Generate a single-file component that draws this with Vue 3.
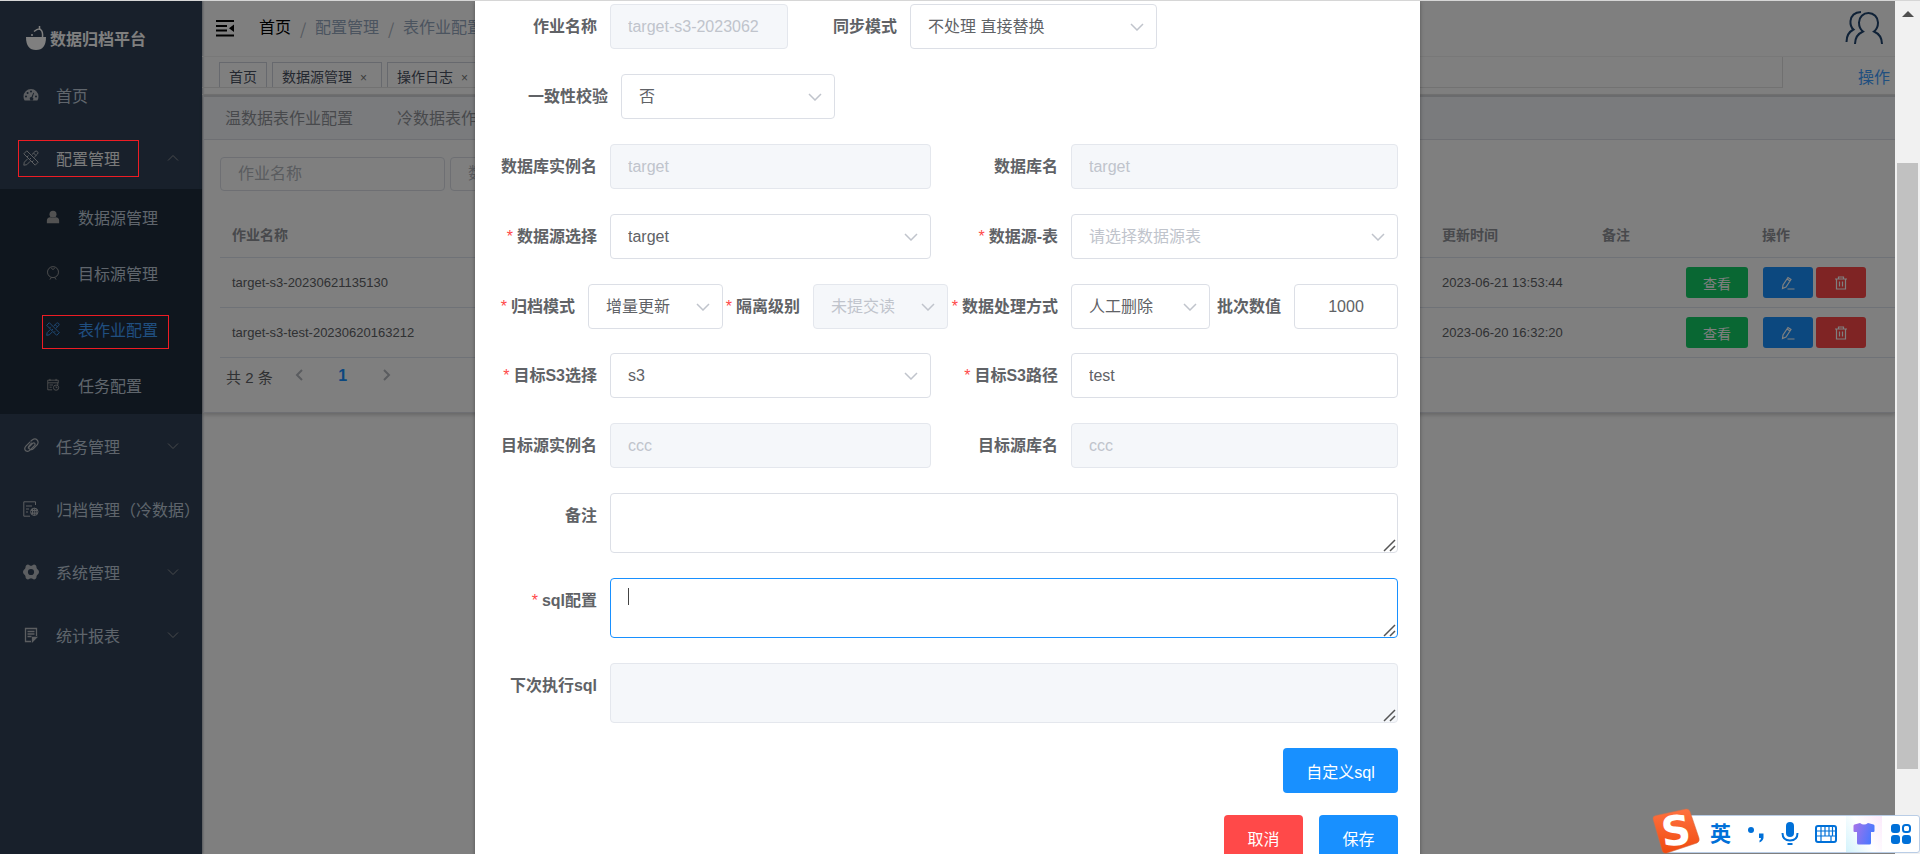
<script setup>
import { ref } from 'vue'

const menu = [
  { label: '首页', icon: 'dash' },
  {
    label: '配置管理', icon: 'tools', arrow: 'fold', open: true, marked: true,
    children: [
      { label: '数据源管理', icon: 'person' },
      { label: '目标源管理', icon: 'medal' },
      { label: '表作业配置', icon: 'tools', active: true },
      { label: '任务配置', icon: 'schedule' }
    ]
  },
  { label: '任务管理', icon: 'link', arrow: 'unfold' },
  { label: '归档管理（冷数据）', icon: 'archive' },
  { label: '系统管理', icon: 'gear', arrow: 'unfold' },
  { label: '统计报表', icon: 'note', arrow: 'unfold' }
]

const icons = {
  dash: '<path fill="currentColor" fill-rule="evenodd" d="M8 2a7.5 7.5 0 0 0-7.5 7.5c0 1.6.4 2.9 1.1 4h12.8c.7-1.1 1.1-2.400 1.100-4A7.500 7.500 0 0 0 8 2ZM3 8.600a1 1 0 1 1 0 2 1 1 0 0 1 0-2Zm1.600-3.600a1 1 0 1 1 0 2 1 1 0 0 1 0-2ZM8 3.400a1 1 0 1 1 0 2 1 1 0 0 1 0-2Zm2.300 2.400.8.300-1.600 4.300a1.700 1.700 0 1 1-1-.3Zm2.700 2.800a1 1 0 1 1 0 2 1 1 0 0 1 0-2Z"/>',
  tools: '<g fill="none" stroke="currentColor"><path d="M.8 3.800 3.800.8 15.200 12.200 12.200 15.200ZM4 7l1.500-1.500M6.500 9.500 8 8M9 12l1.500-1.500"/><path d="M8.800 4.700 12 1.500q1.200-1 2.400.1t.1 2.400L11.300 7.200M4.700 8.800 1.300 12.200.8 15.200l3-.5 3.400-3.400M10.500 3l2.500 2.500"/></g>',
  person: '<g fill="currentColor"><circle cx="8" cy="4.800" r="4"/><path d="M1 15v-3Q1 8.800 5 8.300q3 1.600 6 0 4 .5 4 3.700v3Z"/></g>',
  medal: '<g fill="none" stroke="currentColor"><circle cx="8" cy="7" r="6.300"/><path d="M6 2.500q2 3 4 0M6 13.300l-1.500 2.200M10 13.300l1.500 2.200"/></g>',
  schedule: '<g fill="none" stroke="currentColor"><path d="M2 2.500h12v3H2ZM4.500 1v2.500M11.500 1v2.500M2 5.500v8h5M13.500 5.500V8M4 8h4M4 10.500h2.500"/><circle cx="11.500" cy="11" r="3"/><path d="M11.500 9.500V11H13"/></g>',
  link: '<g fill="none" stroke="currentColor" stroke-width="1.200" stroke-linecap="round"><path d="M5.200 9.800 9.700 5.300q1.200-1 2 0t0 2L7 12.200q-2 2-4.300.6-2-2 .2-4.600l4-4"/><path d="M8 3l1.500-1.300q2.700-1.700 4.600.3t.2 4.700L10.500 10.500q-2 2-4 .5t0-3.700L8.500 5.200"/></g>',
  archive: '<g fill="none" stroke="currentColor"><path d="M12.500 4V.8H.8v14.400H7M3 5h6M3 8h3M3 11h2"/><circle cx="11.300" cy="10.800" r="3.700"/><path d="M7.800 9.500h7M7.800 12.200h7M11.300 7v7.500M9.500 8v5.500M13.200 8v5.500"/></g>',
  gear: '<path fill="currentColor" fill-rule="evenodd" d="M3.300 1.200Q5 0 6.500 1.300q1.500 1 3 0Q11 0 12.700 1.200q.9.8.8 2.300.2 1.500 1.500 2.300Q16 6.500 16 8t-1 2.200q-1.300.8-1.500 2.300.1 1.500-.8 2.300Q11 16 9.500 14.700q-1.500-1-3 0Q5 16 3.300 14.800q-.9-.8-.8-2.300-.2-1.500-1.500-2.300Q0 9.500 0 8t1-2.200q1.300-.8 1.500-2.300-.1-1.500.8-2.300ZM8 4.900a3.100 3.100 0 1 0 0 6.200 3.100 3.100 0 0 0 0-6.200Z"/>',
  note: '<g fill="none" stroke="currentColor" stroke-width="1.300"><path d="M13.500 9V1.500h-11v13H8M4.500 4.500h7M4.500 7h7M4.500 9.500h4"/><path fill="currentColor" d="M9.500 14.500v-4h4Z"/></g>'
}

const tags = [
  { label: '首页' },
  { label: '数据源管理', closable: true },
  { label: '操作日志', closable: true }
]

const jobs = [
  { name: 'target-s3-20230621135130', time: '2023-06-21 13:53:44' },
  { name: 'target-s3-test-20230620163212', time: '2023-06-20 16:32:20' }
]

const rows = [
  {
    layout: 'row-name',
    fields: [
      { id: 'job', label: '作业名称', kind: 'input', value: 'target-s3-20230621135130', disabled: true },
      { id: 'sync', label: '同步模式', kind: 'select', value: '不处理 直接替换' }
    ]
  },
  { layout: 'row-check', fields: [{ id: 'check', label: '一致性校验', kind: 'select', value: '否' }] },
  {
    layout: 'row-pair',
    fields: [
      { id: 'inst', label: '数据库实例名', kind: 'input', value: 'target', disabled: true },
      { id: 'db', label: '数据库名', kind: 'input', value: 'target', disabled: true }
    ]
  },
  {
    layout: 'row-pair',
    fields: [
      { id: 'src', label: '数据源选择', kind: 'select', value: 'target', required: true },
      { id: 'srctable', label: '数据源-表', kind: 'select', value: '请选择数据源表', required: true, empty: true }
    ]
  },
  {
    layout: 'row-modes',
    fields: [
      { id: 'mode', label: '归档模式', kind: 'select', value: '增量更新', required: true },
      { id: 'iso', label: '隔离级别', kind: 'select', value: '未提交读', required: true, disabled: true },
      { id: 'handle', label: '数据处理方式', kind: 'select', value: '人工删除', required: true },
      { id: 'batch', label: '批次数值', kind: 'input', value: '1000', center: true }
    ]
  },
  {
    layout: 'row-pair',
    fields: [
      { id: 's3', label: '目标S3选择', kind: 'select', value: 's3', required: true },
      { id: 's3path', label: '目标S3路径', kind: 'input', value: 'test', required: true }
    ]
  },
  {
    layout: 'row-pair',
    fields: [
      { id: 'tinst', label: '目标源实例名', kind: 'input', value: 'ccc', disabled: true },
      { id: 'tdb', label: '目标源库名', kind: 'input', value: 'ccc', disabled: true }
    ]
  },
  { layout: 'row-area', fields: [{ id: 'remark', label: '备注', kind: 'area' }] },
  { layout: 'row-area', fields: [{ id: 'sql', label: 'sql配置', kind: 'area', required: true, focused: true }] },
  { layout: 'row-area', fields: [{ id: 'nextsql', label: '下次执行sql', kind: 'area', disabled: true }] }
]

const form = ref({ remark: '', sql: '', nextsql: '' })
</script>

<template>
  <div class="app">
    <nav class="sidebar">
      <div class="logo">
        <svg width="22" height="26" viewBox="0 0 22 26" aria-hidden="true">
          <path fill="#fff" d="M1 12h20q0 13-10 13T1 12Z" />
          <path fill="none" stroke="#fff" stroke-width="1.500" d="M9 6.500q5-4 7-1.500 2 2 1.500 7M14.500 5V1" />
          <circle cx="7" cy="10" r="1" fill="#fff" />
        </svg>
        <strong>数据归档平台</strong>
      </div>
      <ul class="menu">
        <li v-for="m in menu" :key="m.label">
          <a href="#" class="item" :class="{ open: m.open, marked: m.marked }">
            <svg width="16" height="16" viewBox="0 0 16 16" aria-hidden="true" v-html="icons[m.icon]"></svg>
            <span>{{ m.label }}</span>
            <svg v-if="m.arrow" class="arrow" :class="m.arrow" width="12" height="8" viewBox="0 0 12 8" aria-hidden="true">
              <path d="M1 1.500 6 6.500 11 1.500" />
            </svg>
          </a>
          <ul v-if="m.children" class="submenu">
            <li v-for="c in m.children" :key="c.label">
              <a href="#" class="item sub" :class="{ active: c.active }">
                <svg width="14" height="14" viewBox="0 0 16 16" aria-hidden="true" v-html="icons[c.icon]"></svg>
                <span>{{ c.label }}</span>
              </a>
            </li>
          </ul>
        </li>
      </ul>
    </nav>

    <main class="main">
      <header class="topbar">
        <svg width="18" height="18" viewBox="0 0 18 18" aria-hidden="true">
          <path fill="none" stroke="#000" stroke-width="2" d="M0 2h18M0 7h11M0 11.500h11M0 16.500h18" />
          <path d="M18 5.500v7.500l-5-3.700Z" />
        </svg>
        <div class="crumbs">
          <a href="#" class="home">首页</a><i>/</i><span>配置管理</span><i>/</i><span>表作业配置</span>
        </div>
        <svg class="users" width="38" height="34" viewBox="0 0 38 34" aria-hidden="true">
          <path d="M10 33q0-9 8-12.500-4-3-4-9a9.500 9.500 0 0 1 19 0q0 6-4 9 8 3.500 8 12.500" />
          <path d="M1.500 31q0-9 7-12.500-3.500-3-3-8.500Q6.500 1.500 16 1" />
        </svg>
      </header>
      <div class="tagbar">
        <div class="tags">
          <span v-for="t in tags" :key="t.label" class="tag">{{ t.label }}<b v-if="t.closable">×</b></span>
        </div>
        <a href="#">操作</a>
      </div>
      <section class="card">
        <div class="tabs"><span>温数据表作业配置</span><span>冷数据表作业配置</span></div>
        <div class="filters">
          <input type="text" placeholder="作业名称" aria-label="作业名称" />
          <input type="text" placeholder="数据源" aria-label="数据源" />
        </div>
        <table>
          <colgroup><col /><col class="c-time" /><col class="c-remark" /><col class="c-ops" /></colgroup>
          <thead>
            <tr><th>作业名称</th><th>更新时间</th><th>备注</th><th class="center">操作</th></tr>
          </thead>
          <tbody>
            <tr v-for="j in jobs" :key="j.name">
              <td>{{ j.name }}</td>
              <td>{{ j.time }}</td>
              <td></td>
              <td>
                <div class="ops">
                  <button type="button" class="view">查看</button>
                  <button type="button" class="edit" aria-label="编辑">
                    <svg width="14" height="14" viewBox="0 0 14 14" aria-hidden="true">
                      <path d="M1.500 12.500 2 9 7 1.500l3 2L5 11ZM6 3l3 2M6.500 13H13.500" />
                    </svg>
                  </button>
                  <button type="button" class="del" aria-label="删除">
                    <svg width="14" height="14" viewBox="0 0 14 14" aria-hidden="true">
                      <path d="M1 3h12M4.500 3V1h5v2M2.500 3v10h9V3M5.500 5.500v5M8.500 5.500v5" />
                    </svg>
                  </button>
                </div>
              </td>
            </tr>
          </tbody>
        </table>
        <div class="pager">
          <span>共 2 条</span>
          <button type="button" aria-label="上一页"><svg width="8" height="12" viewBox="0 0 8 12"><path d="M7 1 2 6l5 5" /></svg></button>
          <button type="button" class="current">1</button>
          <button type="button" aria-label="下一页"><svg width="8" height="12" viewBox="0 0 8 12"><path d="M1 1l5 5-5 5" /></svg></button>
        </div>
      </section>
    </main>

    <div class="overlay">
      <form class="dialog" role="dialog" aria-label="表作业配置" @submit.prevent>
        <div v-for="(r, i) in rows" :key="i" class="row" :class="r.layout">
          <template v-for="f in r.fields" :key="f.id">
            <label :for="f.id"><em v-if="f.required">*</em>{{ f.label }}</label>
            <div class="control">
              <input v-if="f.kind === 'input'" :id="f.id" type="text" :value="f.value" :disabled="f.disabled" :class="{ centered: f.center }" />
              <template v-else-if="f.kind === 'select'">
                <select :id="f.id" :disabled="f.disabled" :class="{ empty: f.empty }"><option>{{ f.value }}</option></select>
                <svg class="caret" width="14" height="8" viewBox="0 0 14 8" aria-hidden="true"><path d="M1 1l6 6 6-6" /></svg>
              </template>
              <template v-else>
                <textarea :id="f.id" v-model="form[f.id]" :disabled="f.disabled" :class="{ focused: f.focused }"></textarea>
                <span v-if="f.focused" class="cursor"></span>
                <svg class="grip" width="13" height="13" viewBox="0 0 13 13" aria-hidden="true"><path d="M1 12 12 1M7 12l5-5" /></svg>
              </template>
            </div>
          </template>
        </div>
        <div class="actions"><button type="button" class="primary wide">自定义sql</button></div>
        <div class="actions footer">
          <button type="button" class="danger">取消</button>
          <button type="submit" class="primary">保存</button>
        </div>
      </form>
    </div>

    <div class="scrollbar" aria-hidden="true"><span class="up"></span><span class="thumb"></span></div>

    <div class="ime">
      <svg class="sogou" width="50" height="46" viewBox="0 0 50 46" aria-hidden="true">
        <defs>
          <linearGradient id="og" x1="0" y1="0" x2="0" y2="1"><stop offset="0" stop-color="#ff7240" /><stop offset="1" stop-color="#f04a10" /></linearGradient>
        </defs>
        <path fill="url(#og)" stroke="#c9714f" stroke-width=".5" d="M4 7.500 34 1q3-.6 4 2.500l9 26.500q1 3.500-2 5L15 45q-4 1-5-3L1 11q-.5-3 3-3.500Z" />
        <text x="24" y="37" text-anchor="middle" transform="rotate(-6 24 23)">S</text>
      </svg>
      <span class="lang">英</span>
      <svg width="18" height="18" viewBox="0 0 18 18" fill="#0070d8" aria-hidden="true"><circle cx="4" cy="5" r="3" /><path d="M12 8.500h4.500v4q0 3-4 5v-2q1.500-1 1.500-2.500h-2Z" /></svg>
      <svg width="18" height="24" viewBox="0 0 18 24" aria-hidden="true"><rect x="5" y="0" width="8" height="15" rx="4" fill="#0070d8" /><path fill="none" stroke="#0070d8" stroke-width="2" d="M1.500 11q0 7.500 7.500 7.500t7.500-7.500M6.500 22h5" /></svg>
      <svg width="22" height="18" viewBox="0 0 22 18" aria-hidden="true"><rect x="1" y="1" width="20" height="16" rx="2" fill="none" stroke="#0070d8" stroke-width="2" /><path fill="none" stroke="#0070d8" stroke-width="1.200" d="M2 6h18M2 11h18M6 2v14M10 2v9M14 2v9M17.500 2v9M16 11v5" /></svg>
      <span class="skin">
        <svg width="22" height="22" viewBox="0 0 22 22" aria-hidden="true">
          <defs><linearGradient id="sg" x1="0" y1="0" x2="1" y2="0.300"><stop offset="0" stop-color="#a873e8" /><stop offset="1" stop-color="#4a78ff" /></linearGradient></defs>
          <path fill="url(#sg)" d="M7 0q4 3 8 0l5.500 1.500q1 .3 1 1.500v5q0 1-1 1H18v11q0 1.500-1.500 1.500h-11Q4 21.500 4 20V9H1.500q-1 0-1-1V3q0-1.200 1-1.500Z" />
        </svg>
      </span>
      <svg width="20" height="20" viewBox="0 0 20 20" aria-hidden="true"><g fill="#0070d8"><rect width="9" height="9" rx="3" /><rect y="11" width="9" height="9" rx="3" /><rect x="11" y="11" width="9" height="9" rx="3" /></g><rect x="12" y="1" width="7" height="7" rx="2.500" fill="none" stroke="#0070d8" stroke-width="2" /></svg>
    </div>
  </div>
</template>

<style>
body { margin: 0; overflow: hidden; }
</style>

<style scoped>
.app {
  position: relative;
  display: flex;
  box-sizing: border-box;
  height: 100vh;
  padding-right: 25px;
  border-top: 1px solid #d6d6d6;
  overflow: hidden;
  background: #fff;
  font-family: "Liberation Sans", "Noto Sans CJK SC", sans-serif;
  font-size: 16px;
  color: #606266;
}
* { box-sizing: border-box; }
ul { margin: 0; padding: 0; list-style: none; }
a { color: inherit; text-decoration: none; }
button, input, select, textarea { font: inherit; }

/* sidebar */
.sidebar { flex: none; width: 202px; background: #304156; box-shadow: 1px 0 2px rgba(0, 21, 41, .35); }
.logo { display: flex; align-items: center; gap: 3px; height: 62px; padding: 11px 0 0 25px; color: #fff; white-space: nowrap; }
.item { position: relative; display: flex; align-items: center; height: 63px; padding-left: 23px; color: #bfcbd9; white-space: nowrap; }
.item > svg:first-child { flex: none; margin-right: 17px; color: #b8bcc2; }
.item.open { color: #f4f4f5; }
.arrow { position: absolute; right: 23px; fill: none; stroke: #909399; }
.arrow.fold { transform: rotate(180deg); }
.submenu { padding-bottom: 1px; background: #1f2d3d; }
.item.sub { height: 56px; padding-left: 46px; }
.item.sub > svg:first-child { margin-right: 18px; color: #a5a5a5; }
.item.active, .item.sub.active > svg:first-child { color: #409eff; }
.marked::after, .active::after { content: ""; position: absolute; z-index: 20; top: 14px; border: 1px solid #ed1c24; }
.marked::after { left: 18px; width: 119px; height: 35px; }
.active::after { left: 42px; width: 125px; height: 32px; }

/* page behind the dialog */
.main { flex: 1; min-width: 0; }
.topbar { display: flex; align-items: center; height: 56px; padding: 0 12px 2px 14px; border-bottom: 1px solid #f0f0f0; }
.crumbs { display: flex; align-items: center; margin-left: 25px; line-height: 24px; color: #97a8be; white-space: nowrap; }
.crumbs i { width: 24px; text-align: center; font-family: "Noto Sans CJK SC", sans-serif; font-style: normal; color: #a9b2c0; }
.crumbs .home { color: #000; }
.users { margin-left: auto; fill: none; stroke: #20446e; stroke-width: 2; }
.tagbar { display: flex; height: 38px; padding-right: 5px; border-bottom: 1px solid #e4e4e4; }
.tags { flex: 1; display: flex; gap: 5px; height: 31px; padding: 5px 0 0 17px; border-right: 1px solid #e0e0e0; border-bottom: 1px solid #e4e4e4; font-size: 14px; line-height: 28px; color: #495060; white-space: nowrap; }
.tag { padding: 0 9px; border: 1px solid #cfd3dc; border-bottom: 0; }
.tag b { margin: 0 5px 0 8px; font-weight: 400; font-size: 12px; color: #777; }
.tagbar > a { width: 107px; text-align: right; line-height: 42px; color: #409eff; }
.card { margin-left: 1px; border: 1px solid #dcdfe6; border-right: 0; border-top: 2px solid #d4d6da; box-shadow: 0 2px 4px rgba(0, 0, 0, .2); }
.tabs { display: flex; gap: 44px; height: 43px; padding-left: 21px; border-bottom: 1px solid #dcdfe6; background: #f5f7fa; line-height: 44px; color: #909399; white-space: nowrap; }
.filters { display: flex; gap: 5px; padding: 17px 0 0 16px; }
.filters input { width: 225px; height: 34px; padding: 0 17px; border: 1px solid #dcdfe6; border-radius: 4px; background: #fff; }
.filters input::placeholder { color: #b4b8bf; opacity: 1; }
table { width: calc(100% - 16px); margin: 20px 0 0 16px; border-collapse: separate; border-spacing: 0; table-layout: fixed; font-size: 14px; }
.c-time { width: 160px; }
.c-remark { width: 67px; }
.c-ops { width: 238px; }
th, td { height: 50px; padding: 0 12px; border-bottom: 1px solid #dfe4ee; text-align: left; white-space: nowrap; }
td { font-size: 13px; }
th { height: 47px; color: #909399; }
th.center { text-align: center; }
.ops { display: flex; justify-content: center; }
.ops button { width: 50px; height: 31px; margin-left: 3px; padding: 0; border: 0; border-radius: 3px; font-size: 14px; color: #fff; }
.ops svg { display: block; margin: 0 auto; fill: none; stroke: #fff; stroke-width: 1.200; }
.ops .view { width: 62px; margin: 0 12px 0 0; background: #13ce66; }
.ops .edit { background: #1890ff; }
.ops .del { background: #ff4949; }
.pager { display: flex; align-items: center; height: 54px; padding: 0 0 18px 22px; font-size: 15px; }
.pager span { margin-right: 4px; }
.pager button { width: 44px; padding: 0; border: 0; background: none; font-size: 16px; font-weight: 700; }
.pager svg { fill: none; stroke: #b4b8bf; stroke-width: 2; }
.pager .current { color: #1890ff; }

/* dialog */
.overlay { position: absolute; z-index: 10; inset: 0 25px 0 0; display: flex; justify-content: center; overflow: hidden; background: rgba(0, 0, 0, .5); }
.dialog { width: 90%; max-width: 945px; min-height: 100%; height: max-content; padding: 3px 22px 22px 0; background: #fff; box-shadow: 0 1px 4px rgba(0, 0, 0, .35); }
.row { display: grid; margin-bottom: 25px; }
.row-name { grid-template-columns: 135px 178px 122px 247px; }
.row-check { grid-template-columns: 146px 214px; }
.row-pair { grid-template-columns: 135px 321fr 140px 327fr; }
.row-modes { grid-template-columns: 113px 135fr 90px 135fr 123px 139fr 84px 104fr; margin-bottom: 24px; }
.row-area { grid-template-columns: 135px 1fr; }
label { padding-right: 13px; text-align: right; line-height: 45px; font-weight: 700; white-space: nowrap; }
label em { margin-right: 4px; font-style: normal; font-weight: 400; color: #ff4949; }
.control { position: relative; }
.control input, .control select, .control textarea { display: block; width: 100%; height: 45px; margin: 0; padding: 0 28px 0 17px; border: 1px solid #dcdfe6; border-radius: 4px; outline: 0; background: #fff; color: #606266; appearance: none; }
.control textarea { height: 60px; padding: 8px 17px; resize: none; }
.control :disabled { border-color: #e4e7ed; background: #f5f7fa; color: #c0c4cc; opacity: 1; }
.control .centered { padding: 0; text-align: center; }
.control .empty { color: #c0c4cc; }
.control .focused { border-color: #1890ff; }
.caret { position: absolute; right: 13px; top: 19px; fill: none; stroke: #c0c4cc; stroke-width: 1.500; pointer-events: none; }
.cursor { position: absolute; left: 18px; top: 10px; width: 1px; height: 17px; background: #444; }
.grip { position: absolute; right: 2px; bottom: 1px; fill: none; stroke: #555; stroke-width: 1.500; pointer-events: none; }
.actions { display: flex; justify-content: flex-end; gap: 16px; }
.actions button { width: 79px; height: 45px; padding: 0; border: 0; border-radius: 4px; color: #fff; }
.actions .wide { width: 115px; }
.footer { margin-top: 22px; }
.primary { background: #1890ff; }
.danger { background: #ff4949; }

/* window furniture */
.scrollbar { position: absolute; z-index: 15; top: 0; right: 0; bottom: 0; width: 25px; background: #f1f1f1; }
.up { position: absolute; top: 10px; left: 7px; border: 6px solid transparent; border-top: 0; border-bottom-color: #505050; }
.thumb { position: absolute; top: 19%; bottom: 10%; left: 2px; right: 2px; background: #c1c1c1; }
.ime { position: absolute; z-index: 30; right: 0; bottom: 1px; display: flex; align-items: center; justify-content: space-between; width: 257px; height: 38px; padding: 0 8px 0 46px; border: 1px solid #b9cde6; border-radius: 3px; background: #fff; }
.sogou { position: absolute; left: -12px; bottom: -2px; }
.sogou text { font: 700 41px "DejaVu Sans", sans-serif; fill: #fff; }
.lang { font-size: 21px; font-weight: 700; line-height: 36px; color: #0070d8; }
.skin { display: flex; align-items: center; justify-content: center; width: 36px; height: 36px; margin: 0 -7px; background: linear-gradient(60deg, #d3f3fc, #fff 50%, #fbe9fb); }
</style>
